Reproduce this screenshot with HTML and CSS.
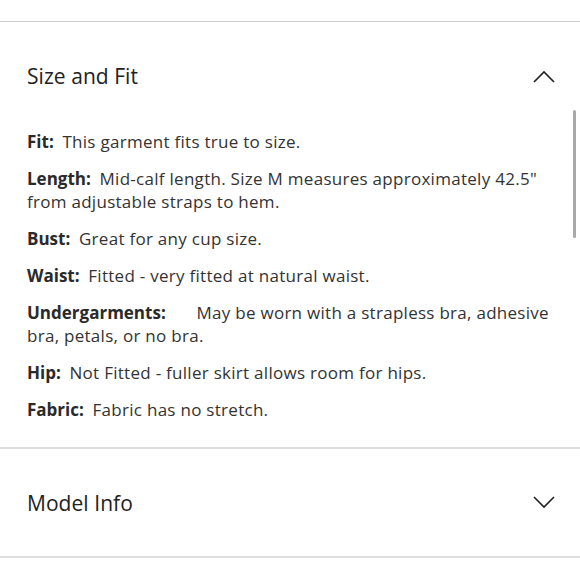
FILE: index.html
```html
<!DOCTYPE html>
<html>
<head>
<meta charset="utf-8">
<link rel="stylesheet" href="styles.css">
</head>
<body>
<div class="page">
  <section class="acc open">
    <div class="acc-head">
      <h2 class="acc-title">Size and Fit</h2>
      <svg class="chev" width="22" height="13" viewBox="0 0 22 13"><path d="M1 12 L11 2 L21 12" fill="none" stroke="#222" stroke-width="1.6"/></svg>
    </div>
    <div class="acc-body">
      <p><b class="lbl">Fit:</b> This garment fits true to size.</p>
      <p><b class="lbl">Length:</b> Mid-calf length. Size M measures approximately 42.5" from adjustable straps to hem.</p>
      <p><b class="lbl">Bust:</b> Great for any cup size.</p>
      <p><b class="lbl">Waist:</b> Fitted - very fitted at natural waist.</p>
      <p><b class="lbl lbl-wide">Undergarments:</b> May be worn with a strapless bra, adhesive bra, petals, or no bra.</p>
      <p><b class="lbl">Hip:</b> Not Fitted - fuller skirt allows room for hips.</p>
      <p><b class="lbl">Fabric:</b> Fabric has no stretch.</p>
    </div>
  </section>
  <section class="acc">
    <div class="acc-head">
      <h2 class="acc-title">Model Info</h2>
      <svg class="chev" width="22" height="13" viewBox="0 0 22 13"><path d="M1 1 L11 11 L21 1" fill="none" stroke="#222" stroke-width="1.6"/></svg>
    </div>
  </section>
  <div class="scrollbar"></div>
</div>
</body>
</html>
```
FILE: styles.css
```css
* { box-sizing: border-box; }
html, body { margin: 0; padding: 0; background: #fff; }
body { font-family: "Open Sans", Lato, sans-serif; color: #2b2b2b; }
.page { position: relative; width: 580px; height: 580px; padding-top: 21px; overflow: hidden; }
.acc { border-top: 1px solid #cfcfcf; }
.acc + .acc { border-top: 2px solid #dedede; }
.acc:last-of-type { border-bottom: 2px solid #dedede; }
.acc-head { display: flex; align-items: center; justify-content: space-between; height: 108px; padding: 0 25px 0 27px; }
.acc:last-of-type .acc-head { height: 107px; }
.acc-title { margin: 0; font-size: 21px; font-weight: 400; color: #222; letter-spacing: 0.05px; }
.chev { display: block; }
.acc-body { padding: 0 20px 26px 27px; }
.acc-body p { margin: 0 0 14px 0; font-size: 17px; line-height: 23px; color: #333; letter-spacing: 0.28px; }
.acc-body p:last-child { margin-bottom: 0; }
.lbl { font-weight: 700; color: #2a2a2a; letter-spacing: 0; margin-right: 4px; }
.lbl-wide { margin-right: 26px; }
.scrollbar { position: absolute; right: 4px; top: 110px; width: 3px; height: 128px; border-radius: 2px; background: #a9a9a9; }
```
